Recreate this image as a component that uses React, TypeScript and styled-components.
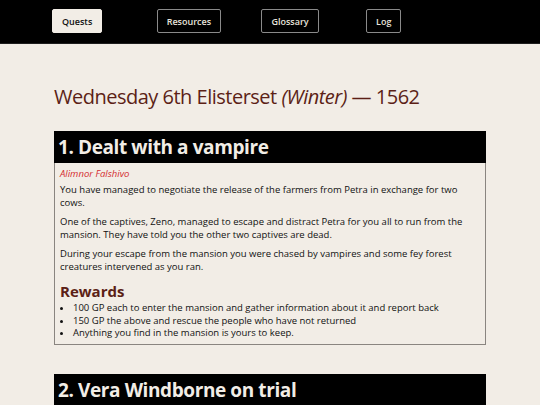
import React, { FC } from "react";
import styled, { createGlobalStyle } from "styled-components";

type Quest = {
  title: string;
  giver?: string;
  paragraphs: string[];
  rewards: string[];
};

const quests: Quest[] = [
  {
    title: "1. Dealt with a vampire",
    giver: "Alimnor Falshivo",
    paragraphs: [
      "You have managed to negotiate the release of the farmers from Petra in exchange for two cows.",
      "One of the captives, Zeno, managed to escape and distract Petra for you all to run from the mansion. They have told you the other two captives are dead.",
      "During your escape from the mansion you were chased by vampires and some fey forest creatures intervened as you ran.",
    ],
    rewards: [
      "100 GP each to enter the mansion and gather information about it and report back",
      "150 GP the above and rescue the people who have not returned",
      "Anything you find in the mansion is yours to keep.",
    ],
  },
  {
    title: "2. Vera Windborne on trial",
    paragraphs: [
      "Vera has been brought before the council to answer for what happened at the mill.",
    ],
    rewards: [],
  },
];

const navItems = ["Quests", "Resources", "Glossary", "Log"];

const QuestCard: FC<{ quest: Quest }> = ({ quest }) => {
  return (
    <Card>
      <CardTitle>{quest.title}</CardTitle>
      <CardBody>
        {quest.giver && <Giver>{quest.giver}</Giver>}
        {quest.paragraphs.map((p) => (
          <Para key={p}>{p}</Para>
        ))}
        {quest.rewards.length > 0 && (
          <>
            <RewardsTitle>Rewards</RewardsTitle>
            <RewardList>
              {quest.rewards.map((r) => (
                <li key={r}>{r}</li>
              ))}
            </RewardList>
          </>
        )}
      </CardBody>
    </Card>
  );
};

const App: FC = () => {
  return (
    <>
      <GlobalStyle />
      <Header>
        <Nav>
          {navItems.map((item, i) => (
            <NavCell key={item}>
              <NavButton $active={i === 0}>{item}</NavButton>
            </NavCell>
          ))}
        </Nav>
      </Header>
      <Main>
        <DateTitle>
          Wednesday 6th Elisterset <em>(Winter)</em> — 1562
        </DateTitle>
        {quests.map((q) => (
          <QuestCard key={q.title} quest={q} />
        ))}
      </Main>
    </>
  );
};

// Style
const GlobalStyle = createGlobalStyle`
  html, body {
    margin: 0;
    padding: 0;
    background: #f2ede6;
    font-family: "Open Sans", "Noto Sans", sans-serif;
    color: #111;
  }
`;

const Header = styled.header`
  height: 43px;
  background: #000;
  border-bottom: 1px solid #1e1e1e;
  display: flex;
  align-items: center;
`;

const Nav = styled.nav`
  display: grid;
  grid-template-columns: repeat(4, 104.7px);
  padding-left: 52px;
  padding-bottom: 1px;
`;

const NavCell = styled.div`
  display: flex;
`;

const NavButton = styled.button<{ $active?: boolean }>`
  height: 24px;
  padding: 0 9px;
  font-family: "Open Sans", "Noto Sans", sans-serif;
  font-size: 9px;
  font-weight: 600;
  border-radius: 2px;
  cursor: pointer;
  border: 1px solid ${(p) => (p.$active ? "#f2ede6" : "#8a8a8a")};
  background: ${(p) => (p.$active ? "#f2ede6" : "#000")};
  color: ${(p) => (p.$active ? "#111" : "#e8e4dc")};
`;

const Main = styled.main`
  padding: 0 54px;
`;

const DateTitle = styled.h1`
  margin: 40px 0 21px;
  font-size: 20px;
  letter-spacing: -0.5px;
  font-weight: 400;
  line-height: 26px;
  color: #5c1f16;
  em {
    font-style: italic;
  }
`;

const Card = styled.section`
  margin-bottom: 29px;
`;

const CardTitle = styled.h2`
  margin: 0;
  height: 32px;
  padding: 0 4px;
  background: #000;
  color: #f2ede6;
  font-size: 19px;
  letter-spacing: -0.4px;
  font-weight: 700;
  line-height: 32px;
`;

const CardBody = styled.div`
  border: 1px solid #8a8580;
  border-top: none;
  padding: 4px 5px 4px;
  font-size: 9.5px;
  line-height: 13px;
`;

const Giver = styled.div`
  color: #d42a2f;
  font-style: italic;
  margin-bottom: 3px;
`;

const Para = styled.p`
  margin: 0 0 6px;
`;

const RewardsTitle = styled.h3`
  margin: 9px 0 2px;
  font-size: 15px;
  line-height: 18px;
  font-weight: 700;
  color: #5c1f16;
`;

const RewardList = styled.ul`
  margin: 0;
  padding-left: 13px;
  line-height: 12.7px;
`;

export default App;
